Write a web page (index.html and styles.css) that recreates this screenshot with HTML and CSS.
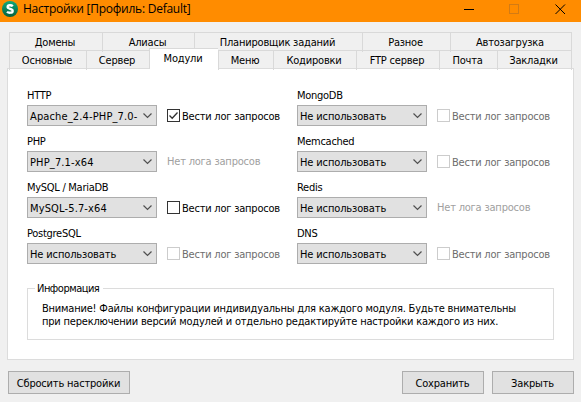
FILE: index.html
```html
<!DOCTYPE html>
<html lang="ru">
<head>
<meta charset="utf-8">
<title>Настройки</title>
<link rel="stylesheet" href="styles.css">
</head>
<body>
<div class="window">
  <header class="titlebar">
    <svg class="logo" width="16" height="16" viewBox="0 0 16 16"><defs><linearGradient id="g" x1="0" y1="0" x2="0" y2="1"><stop offset="0" stop-color="#13a97a"/><stop offset="1" stop-color="#04603f"/></linearGradient></defs><circle cx="8" cy="8" r="8" fill="url(#g)"/><path d="M10.8 5.2C9.600 3.900 5.600 3.700 5.600 6.100C5.600 8.400 10.700 7.300 10.700 9.900C10.700 12.300 6.400 12.100 5 10.700" fill="none" stroke="#fff" stroke-width="2.300"/></svg>
    <h1 class="title">Настройки [Профиль: Default]</h1>
    <svg class="controls" width="102" height="12" viewBox="0 0 102 12" fill="none" shape-rendering="crispEdges"><path d="M0 5.5h10" stroke="#000"/><rect x="45.500" y=".5" width="9" height="9" stroke="#d37b14"/><path d="M91.500 .5l9.500 9.500M101 .5l-9.500 9.500" stroke="#000" shape-rendering="auto"/></svg>
  </header>
  <nav class="tabs">
    <div class="tab-row back"><a class="tab">Домены</a><a class="tab">Алиасы</a><a class="tab">Планировщик заданий</a><a class="tab">Разное</a><a class="tab">Автозагрузка</a></div>
    <div class="tab-row front"><a class="tab">Основные</a><a class="tab">Сервер</a><a class="tab active">Модули</a><a class="tab">Меню</a><a class="tab">Кодировки</a><a class="tab">FTP сервер</a><a class="tab">Почта</a><a class="tab">Закладки</a></div>
  </nav>
  <main class="panel">
    <div class="modules">
      <section class="module"><h2 class="name">HTTP</h2><div class="line"><div class="select"><span class="version">Apache_2.4-PHP_7.0-</span><svg class="arrow" viewBox="0 0 9 6"><path d="M.5 .5l4 4l4-4"/></svg></div><label class="check"><span class="box"><svg viewBox="0 0 11 11"><path d="M1.500 5.500l2.700 2.800L9.500 2.500"/></svg></span><span>Вести лог запросов</span></label></div></section>
      <section class="module"><h2 class="name">MongoDB</h2><div class="line"><div class="select"><span>Не использовать</span><svg class="arrow" viewBox="0 0 9 6"><path d="M.5 .5l4 4l4-4"/></svg></div><label class="check disabled"><span class="box"></span><span>Вести лог запросов</span></label></div></section>
      <section class="module"><h2 class="name">PHP</h2><div class="line"><div class="select"><span class="version">PHP_7.1-x64</span><svg class="arrow" viewBox="0 0 9 6"><path d="M.5 .5l4 4l4-4"/></svg></div><span class="nolog">Нет лога запросов</span></div></section>
      <section class="module"><h2 class="name">Memcached</h2><div class="line"><div class="select"><span>Не использовать</span><svg class="arrow" viewBox="0 0 9 6"><path d="M.5 .5l4 4l4-4"/></svg></div><label class="check disabled"><span class="box"></span><span>Вести лог запросов</span></label></div></section>
      <section class="module"><h2 class="name">MySQL / MariaDB</h2><div class="line"><div class="select"><span class="version">MySQL-5.7-x64</span><svg class="arrow" viewBox="0 0 9 6"><path d="M.5 .5l4 4l4-4"/></svg></div><label class="check"><span class="box"></span><span>Вести лог запросов</span></label></div></section>
      <section class="module"><h2 class="name">Redis</h2><div class="line"><div class="select"><span>Не использовать</span><svg class="arrow" viewBox="0 0 9 6"><path d="M.5 .5l4 4l4-4"/></svg></div><span class="nolog">Нет лога запросов</span></div></section>
      <section class="module"><h2 class="name">PostgreSQL</h2><div class="line"><div class="select"><span>Не использовать</span><svg class="arrow" viewBox="0 0 9 6"><path d="M.5 .5l4 4l4-4"/></svg></div><label class="check disabled"><span class="box"></span><span>Вести лог запросов</span></label></div></section>
      <section class="module"><h2 class="name">DNS</h2><div class="line"><div class="select"><span>Не использовать</span><svg class="arrow" viewBox="0 0 9 6"><path d="M.5 .5l4 4l4-4"/></svg></div><label class="check disabled"><span class="box"></span><span>Вести лог запросов</span></label></div></section>
    </div>
    <fieldset class="info">
      <legend>Информация</legend>
      <p>Внимание! Файлы конфигурации индивидуальны для каждого модуля. Будьте внимательны</p>
      <p>при переключении версий модулей и отдельно редактируйте настройки каждого из них.</p>
    </fieldset>
  </main>
  <footer class="actions"><button class="reset">Сбросить настройки</button><button>Сохранить</button><button>Закрыть</button></footer>
</div>
</body>
</html>
```
FILE: styles.css
```css
* { box-sizing: border-box; }
body { margin: 0; background: #f0f0f0; color: #000; font: 11px/13px "DejaVu Sans Condensed", "DejaVu Sans", sans-serif; font-stretch: condensed; letter-spacing: -.2px; }
h1, h2, p { margin: 0; font-size: inherit; font-weight: normal; }
.window { width: 581px; height: 402px; overflow: hidden; }
.titlebar { display: flex; height: 22px; background: #ff8c00; padding-left: 2px; }
.logo { margin-top: 1px; }
.title { flex: 1; margin-left: 5px; font: 12px/18px "Open Sans", sans-serif; letter-spacing: -.25px; white-space: nowrap; }
.controls { margin: 4px 15px 0 0; }
.tabs { padding: 10px 9px 0; }
.tab-row { display: grid; height: 18px; }
.back { grid-template-columns: 93px 92px 168px 88px 122px; }
.front { grid-template-columns: 77px 63px 69px 55px 83px 83px 58px 75px; }
.tab { padding-right: 2px; border: 1px solid #d9d9d9; border-width: 1px 0 0 1px; text-align: center; line-height: 19px; white-space: nowrap; }
.tab:last-child { border-right-width: 1px; }
.active { position: relative; z-index: 1; height: 21px; margin-top: -2px; background: #fff; }
.panel { width: 567px; height: 292px; margin-left: 7px; padding: 18px 19px 0; border: 1px solid #dcdcdc; background: #fff; }
.modules { display: grid; grid-template-columns: 270px 257px; grid-auto-rows: 46px; }
.name { height: 18px; line-height: 18px; letter-spacing: -.28px; }
.line { display: flex; align-items: center; gap: 10px; white-space: nowrap; }
.select { display: flex; align-items: center; justify-content: space-between; width: 130px; height: 21px; padding: 1px 4px 0 2px; border: 1px solid #adadad; background: #e1e1e1; letter-spacing: -.13px; }
.version { letter-spacing: .14px; }
.arrow { width: 9px; height: 6px; fill: none; stroke: #505050; stroke-width: 1.2; }
.check { display: flex; align-items: center; gap: 2px; letter-spacing: -.22px; }
.check > span:last-child { padding-top: 1px; }
.box { width: 13px; height: 13px; border: 1px solid #333; background: #fff; }
.box svg { display: block; fill: none; stroke: #333; stroke-width: 1.3; }
.disabled { color: #6d6d6d; }
.disabled .box { border-color: #ccc; }
.nolog { color: #a0a0a0; }
.info { margin: 11px 0 0; height: 58px; width: 527px; padding: 7px 14px 0; border: 1px solid #dcdcdc; white-space: nowrap; }
.info legend { margin-left: -7px; padding: 0 4px 0 2px; letter-spacing: -.5px; }
.actions { display: flex; gap: 8px; padding: 11px 7px 0 8px; }
button { width: 82px; height: 23px; padding: 1px 1px 0 0; border: 1px solid #adadad; background: #e1e1e1; color: #000; font: inherit; letter-spacing: -.19px; }
.reset { width: 122px; margin-right: auto; }
```
